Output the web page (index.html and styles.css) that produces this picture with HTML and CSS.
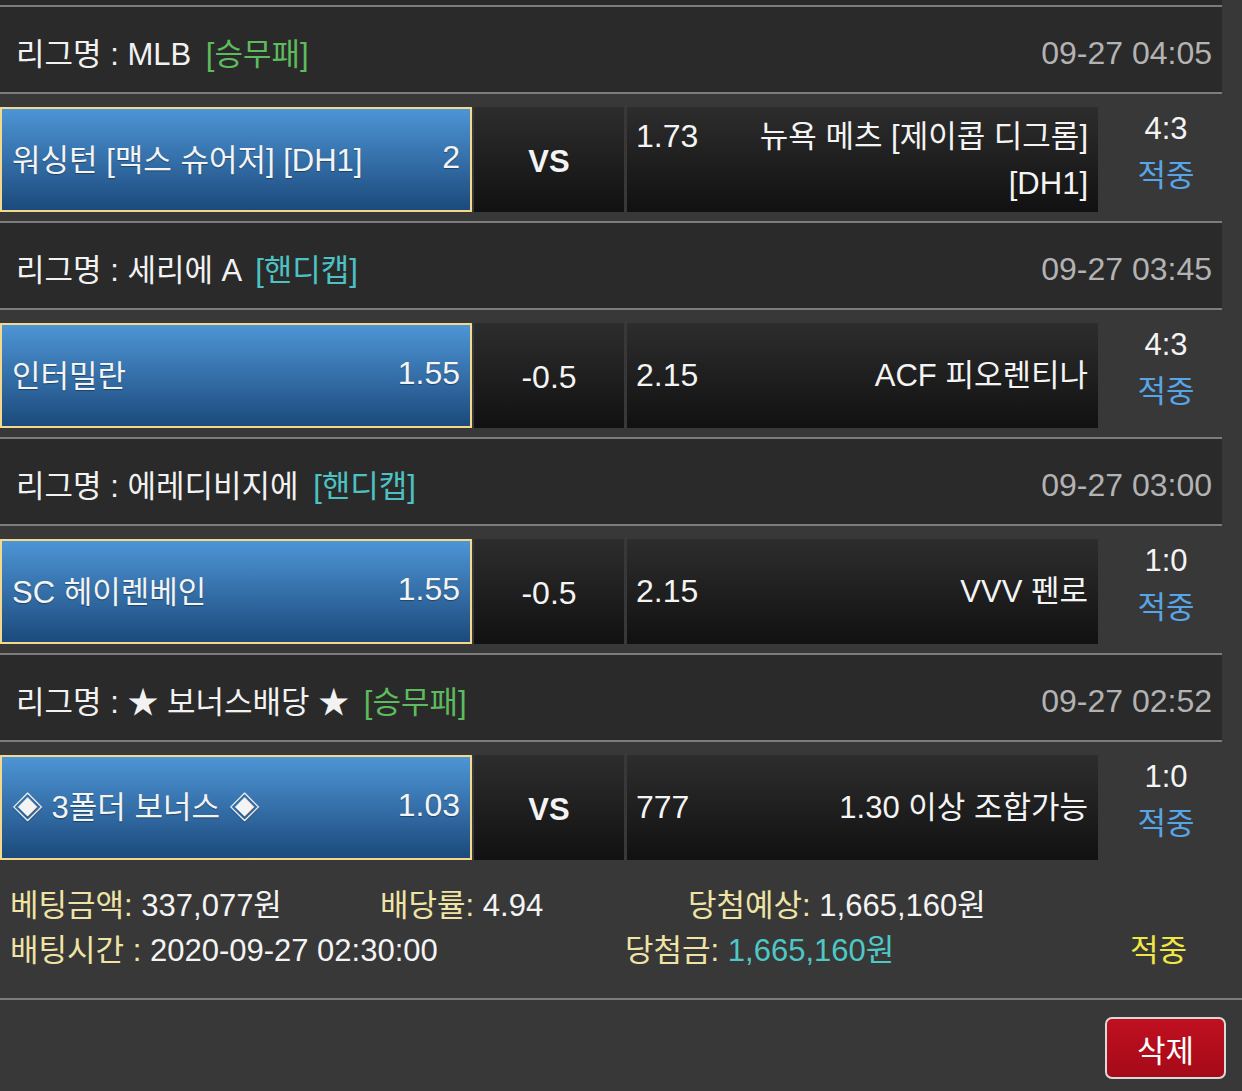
FILE: index.html
```html
<!DOCTYPE html>
<html lang="ko">
<head>
    <meta charset="UTF-8">
    <meta name="viewport" content="width=device-width, initial-scale=1.0">
    <title>배팅내역</title>
    <link rel="stylesheet" href="styles.css">
</head>
<body>
    <div class="bet-list">
        <div class="league">
            <div class="league-name">리그명 : MLB <span class="type type-1x2">[승무패]</span></div>
            <div class="league-date">09-27 04:05</div>
        </div>
        <div class="match">
            <div class="cell home selected">
                <span class="team">워싱턴 [맥스 슈어저] [DH1]</span>
                <span class="odds">2</span>
            </div>
            <div class="cell middle"><b>VS</b></div>
            <div class="cell away">
                <div class="away-line">
                    <span class="odds">1.73</span>
                    <span class="team">뉴욕 메츠 [제이콥 디그롬] [DH1]</span>
                </div>
            </div>
            <div class="result">
                <span class="score">4:3</span>
                <span class="hit">적중</span>
            </div>
        </div>

        <div class="league">
            <div class="league-name">리그명 : 세리에 A <span class="type type-hc">[핸디캡]</span></div>
            <div class="league-date">09-27 03:45</div>
        </div>
        <div class="match">
            <div class="cell home selected">
                <span class="team">인터밀란</span>
                <span class="odds">1.55</span>
            </div>
            <div class="cell middle">-0.5</div>
            <div class="cell away">
                <div class="away-line">
                    <span class="odds">2.15</span>
                    <span class="team">ACF 피오렌티나</span>
                </div>
            </div>
            <div class="result">
                <span class="score">4:3</span>
                <span class="hit">적중</span>
            </div>
        </div>

        <div class="league">
            <div class="league-name">리그명 : 에레디비지에 <span class="type type-hc">[핸디캡]</span></div>
            <div class="league-date">09-27 03:00</div>
        </div>
        <div class="match">
            <div class="cell home selected">
                <span class="team">SC 헤이렌베인</span>
                <span class="odds">1.55</span>
            </div>
            <div class="cell middle">-0.5</div>
            <div class="cell away">
                <div class="away-line">
                    <span class="odds">2.15</span>
                    <span class="team">VVV 펜로</span>
                </div>
            </div>
            <div class="result">
                <span class="score">1:0</span>
                <span class="hit">적중</span>
            </div>
        </div>

        <div class="league">
            <div class="league-name">리그명 : ★ 보너스배당 ★ <span class="type type-1x2">[승무패]</span></div>
            <div class="league-date">09-27 02:52</div>
        </div>
        <div class="match">
            <div class="cell home selected">
                <span class="team">◈ 3폴더 보너스 ◈</span>
                <span class="odds">1.03</span>
            </div>
            <div class="cell middle"><b>VS</b></div>
            <div class="cell away">
                <div class="away-line">
                    <span class="odds">777</span>
                    <span class="team">1.30 이상 조합가능</span>
                </div>
            </div>
            <div class="result">
                <span class="score">1:0</span>
                <span class="hit">적중</span>
            </div>
        </div>
    </div>

    <div class="summary">
        <div class="summary-row">
            <div class="item w-370"><span class="label">베팅금액:</span> 337,077원</div>
            <div class="item w-308"><span class="label">배당률:</span> 4.94</div>
            <div class="item"><span class="label">당첨예상:</span> 1,665,160원</div>
        </div>
        <div class="summary-row">
            <div class="item w-615"><span class="label">배팅시간 :</span> 2020-09-27 02:30:00</div>
            <div class="item w-505"><span class="label">당첨금:</span> <span class="win-amount">1,665,160원</span></div>
            <div class="item status">적중</div>
        </div>
    </div>

    <div class="actions">
        <button type="button" class="delete-button">삭제</button>
    </div>
</body>
</html>
```

FILE: styles.css
```css
body {
    margin: 0;
    padding: 0;
    background: #383838;
    color: #f4f4f4;
    font-family: "Liberation Sans", "Noto Sans CJK KR", sans-serif;
    font-size: 31px;
}

.bet-list {
    width: 1222px;
    border-top: 5px solid #2a2a2a;
}

.league {
    display: flex;
    align-items: center;
    justify-content: space-between;
    height: 85px;
    padding: 0 10px 0 16px;
    background: #2a2a2a;
    border-top: 2px solid #7c7c7c;
    border-bottom: 2px solid #7c7c7c;
}

.league-name {
    color: #f2f2f2;
    padding-top: 4px;
}

.type {
    margin-left: 6px;
}

.type-1x2 {
    color: #5dbb5d;
}

.type-hc {
    color: #4cc2c4;
}

.league-date {
    color: #b3b3b3;
    font-size: 32px;
    padding-top: 8px;
}

.match {
    display: flex;
    height: 127px;
    box-sizing: border-box;
    padding: 13px 0 9px;
}

.cell {
    display: flex;
    align-items: center;
    box-sizing: border-box;
    background: linear-gradient(to bottom, #2d2d2d, #111);
}

.home {
    width: 472px;
    justify-content: space-between;
    padding: 0 10px 4px;
    border: 2px solid #f4d88c;
    background: linear-gradient(to bottom, #4d95d6, #1c4a7c);
    text-shadow: 0 1px 1px rgba(0, 0, 0, 0.35);
}

.home .odds {
    font-size: 32px;
}

.middle {
    width: 150px;
    margin-left: 2px;
    justify-content: center;
    font-size: 32px;
    padding-top: 4px;
}

.middle b {
    font-size: 31px;
}

.away {
    width: 471px;
    margin-left: 3px;
    padding: 0 10px 0 9px;
    line-height: 1.5;
}

.away-line {
    display: flex;
    align-items: baseline;
    width: 100%;
}

.away .odds {
    font-size: 32px;
}

.away .team {
    flex: 1;
    margin-left: 20px;
    text-align: right;
}

.result {
    display: flex;
    flex-direction: column;
    align-items: center;
    justify-content: center;
    width: 122px;
    box-sizing: border-box;
    margin-left: 2px;
    padding: 0 0 16px 10px;
    line-height: 47px;
}

.hit {
    color: #57a5e6;
}

.summary {
    padding: 14px 0 25px 10px;
    border-bottom: 2px solid #7c7c7c;
    line-height: 45px;
}

.summary-row {
    display: flex;
}

.w-370 {
    width: 370px;
}

.w-308 {
    width: 308px;
}

.w-615 {
    width: 615px;
}

.w-505 {
    width: 505px;
}

.label {
    color: #efe4a6;
}

.win-amount {
    color: #4ec8c6;
}

.status {
    color: #efe844;
}

.actions {
    display: flex;
    justify-content: flex-end;
    padding: 17px 16px 0 0;
}

.delete-button {
    width: 121px;
    height: 62px;
    background: linear-gradient(to bottom, #c01020, #a50a18);
    color: #fff;
    border: 2px solid #d9d9d9;
    border-radius: 7px;
    font-family: "Liberation Sans", "Noto Sans CJK KR", sans-serif;
    font-size: 31px;
    cursor: pointer;
}
```
